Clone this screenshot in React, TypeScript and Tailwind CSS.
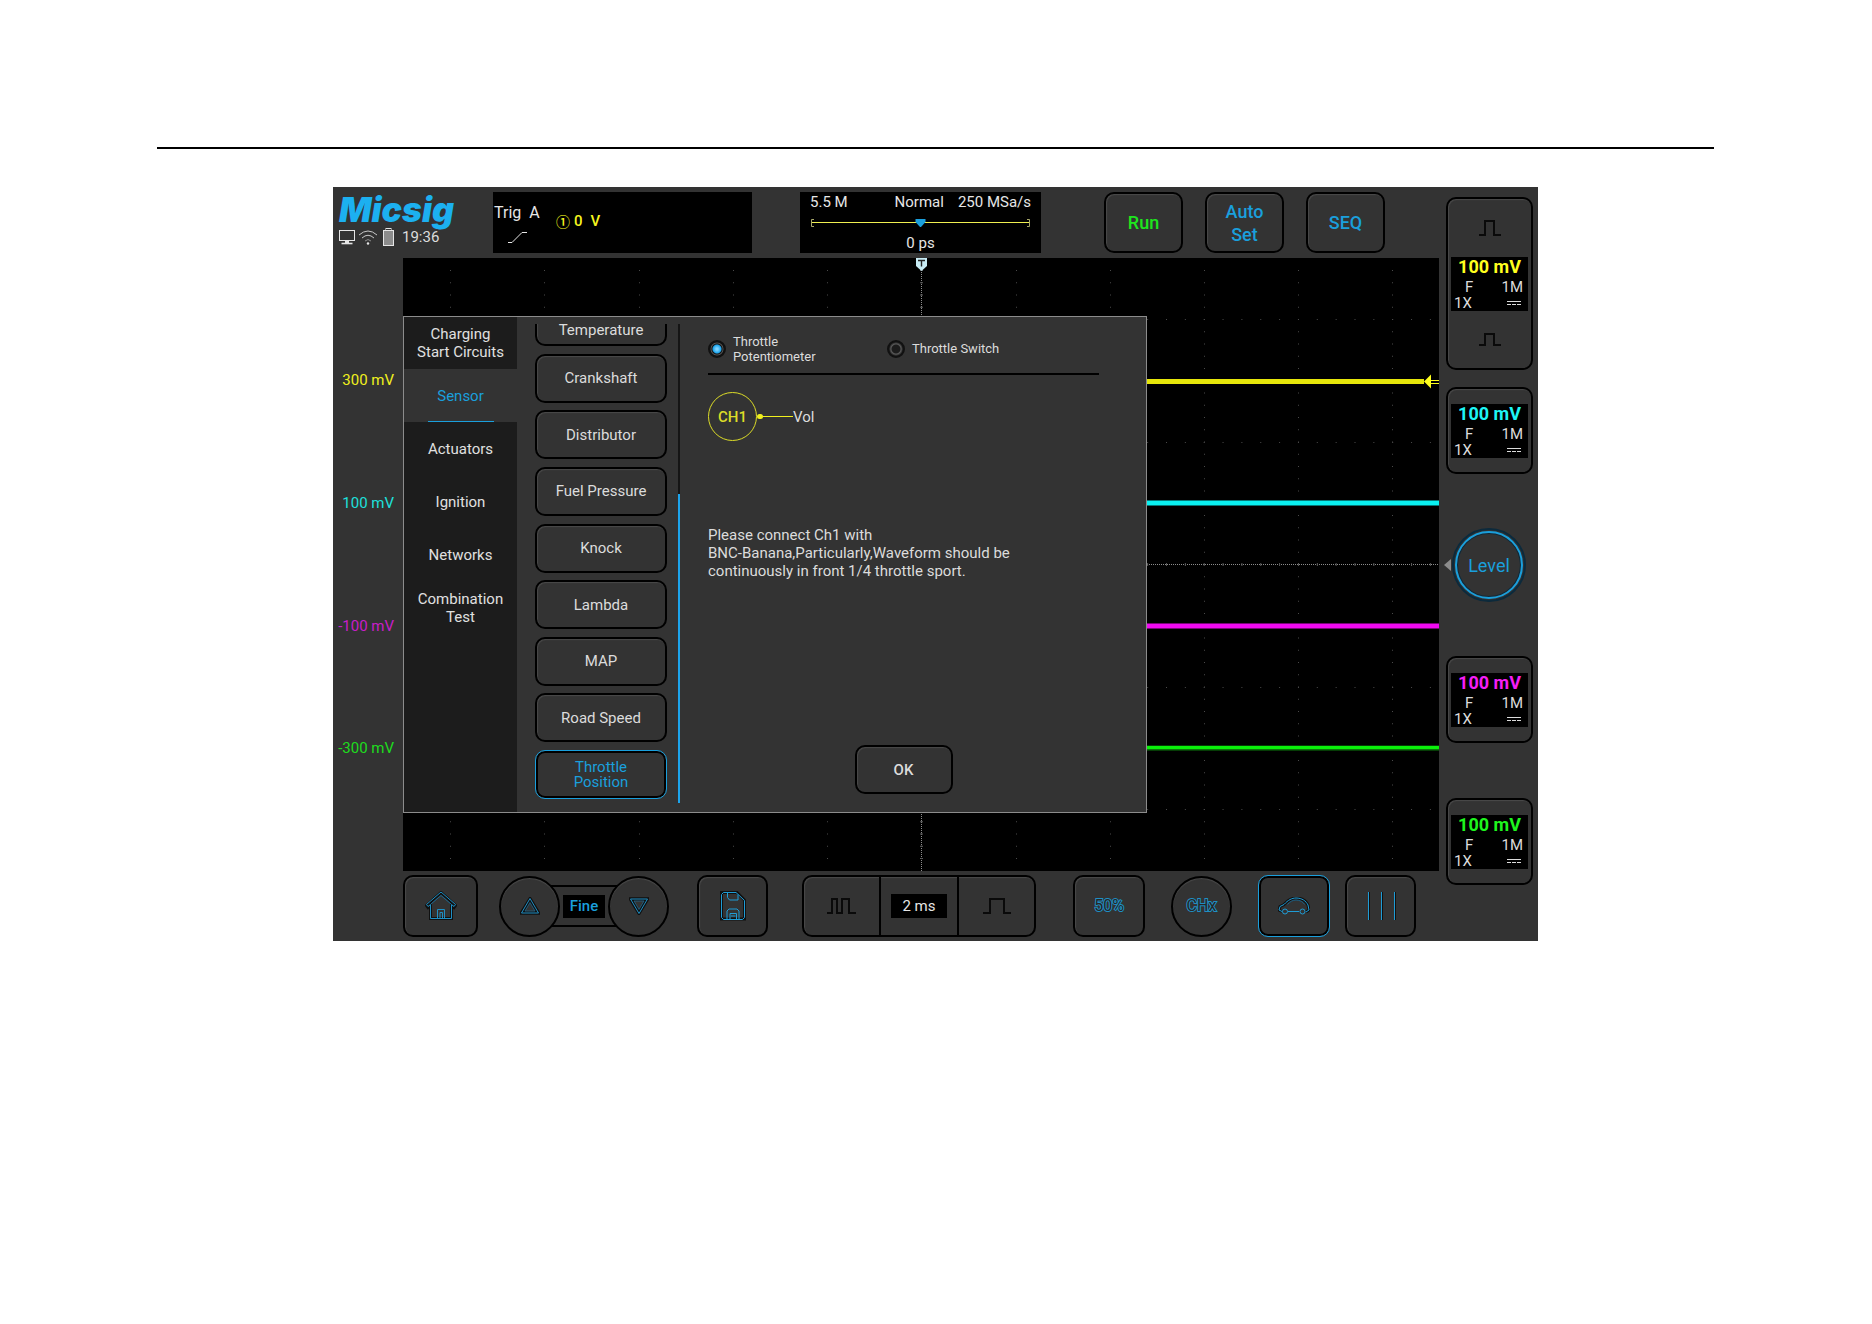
import React, { useState } from 'react';
import { clsx } from 'clsx';

const KEY =
  'border-2 border-black bg-[#333] rounded-[10px] shadow-[inset_1px_1px_1px_#4a4a4a] flex items-center justify-center';
const KEY_ACTIVE =
  'border border-[#1a9fdc] bg-[#333] rounded-[10px] shadow-[inset_0_0_0_2px_#000] flex items-center justify-center';
const ROUND_KEY =
  'border-2 border-black bg-[#333] rounded-full shadow-[inset_0_1px_1px_#4a4a4a] flex items-center justify-center';

const tabs = ['Charging\nStart Circuits', 'Sensor', 'Actuators', 'Ignition', 'Networks', 'Combination\nTest'];

const sensors = [
  'Temperature',
  'Crankshaft',
  'Distributor',
  'Fuel Pressure',
  'Knock',
  'Lambda',
  'MAP',
  'Road Speed',
  'Throttle\nPosition',
];

const scaleLabels = [
  { text: '300 mV', color: 'text-[#f0f01e]' },
  { text: '100 mV', color: 'text-[#1ee0dc]' },
  { text: '-100 mV', color: 'text-[#c81ec8]' },
  { text: '-300 mV', color: 'text-[#1edc1e]' },
];

/* ---------- icons ---------- */

const MonitorIcon = () => (
  <svg width="16" height="16" viewBox="0 0 16 16" fill="none" stroke="#e6e6e6">
    <rect x="0.5" y="1.5" width="15" height="10" />
    <path d="M8 11.5v3" strokeWidth="4" />
    <path d="M2.5 14.5h11" strokeWidth="1.6" />
  </svg>
);

const WifiIcon = () => (
  <svg width="20" height="16" viewBox="0 0 20 16" fill="none" stroke="#c8c8c8">
    <path d="M1 6Q10 -2 19 6" />
    <path d="M4 9Q10 3.5 16 9" />
    <path d="M7 12Q10 9 13 12" stroke="#8c8c8c" />
    <circle cx="10" cy="14.5" r="1.2" fill="#e6e6e6" stroke="none" />
  </svg>
);

const BatteryIcon = () => (
  <svg width="11" height="18" viewBox="0 0 11 18">
    <rect x="3" y="0.5" width="5" height="2" fill="none" stroke="#e6e6e6" />
    <rect x="0.5" y="2.5" width="10" height="15" fill="#8c8c8c" stroke="#e6e6e6" />
  </svg>
);

const PulseIcon = ({ d, width = 24 }: { d: string; width?: number }) => (
  <svg width={width} height="18" viewBox={`0 0 ${width} 18`} fill="none" stroke="#0a0a0a" strokeWidth="2">
    <path d={d} />
  </svg>
);

const HomeIcon = () => (
  <svg width="32" height="30" viewBox="0 0 32 30" fill="none">
    <g stroke="#101010" strokeWidth="3">
      <path d="M1.5 14.5L16 1.5l14.5 13-1.5 2L26.5 14.5v13h-21v-13L3 16.5z" />
    </g>
    <g stroke="#1f8fc4">
      <path d="M1.5 13.5L16 1l14.5 12.5-1.5 2L26.5 13.500V27.500h-21V13.500L3 15.500z" />
      <path d="M6 13l10-8.500L26 13" stroke="#1a6a94" />
      <path d="M12.500 27.500v-9h7v9M15 27.500v-6h2.500v6" />
    </g>
  </svg>
);

const TriangleIcon = ({ down }: { down?: boolean }) => (
  <svg width="20" height="18" viewBox="0 0 20 18" fill="none" className={clsx(down && 'rotate-180')}>
    <path d="M10 2L18.5 16h-17z" stroke="#101010" strokeWidth="3.500" />
    <path d="M10 1.5L18.5 16h-17z" stroke="#1f8fc4" />
    <path d="M10 5.5L15 14H5z" stroke="#1f6f98" strokeWidth="0.7" />
  </svg>
);

const SaveIcon = () => (
  <svg width="26" height="30" viewBox="0 0 26 30" fill="none">
    <path d="M1.5 1.5H17L24.5 9v19h-23z" stroke="#101010" strokeWidth="3" />
    <g stroke="#1f9cd6">
      <path d="M3.5 1.5H16L24.5 9.5v17l-2 2h-19l-2-2v-23z" />
      <path d="M7.5 1.5v5l2 2.5h8.500V3.500" />
      <path d="M7 28.500V20l2-2h8l2 2v8.500" />
      <path d="M10 28v-5.500h6.500V28M11 25h4.500" />
    </g>
  </svg>
);

const CarIcon = () => (
  <svg width="32" height="18" viewBox="0 0 32 18" fill="none">
    <g stroke="#101010" strokeWidth="3">
      <path d="M4 14.5L1 13l1-3.5 4-2C10 3 14 1 18 1c6 0 10 3 12 7l1 5-3 2" />
    </g>
    <g stroke="#1f9cd6">
      <path d="M4 14.5L1 13l1-3.5 4-2C10 3 14 1 18 1c6 0 10 3 12 7l1 5-3 2M10 14.5h11" />
      <path d="M9.500 7.500C12 4.500 15 3 18 3c4 0 7 2 8.500 4.500" stroke="#1a5f84" />
      <circle cx="7" cy="14.5" r="2.5" />
      <circle cx="24.5" cy="14.5" r="2.5" />
    </g>
  </svg>
);

const BarsIcon = () => (
  <svg width="30" height="30" viewBox="0 0 30 30">
    <path d="M3.500 1v28M16.500 1v28M29.500 1v28" stroke="#101010" />
    <path d="M2.500 1v28M15.500 1v28M28.500 1v28" stroke="#1f9cd6" />
  </svg>
);

const DcIcon = () => (
  <svg width="14" height="6" viewBox="0 0 14 6" stroke="#dcdcdc">
    <path d="M0 1.5h14" />
    <path d="M0 4.5h14" strokeDasharray="4 1" />
  </svg>
);

/* ---------- header ---------- */

const Header = () => (
  <header className="flex h-[71px] items-start pt-[5px]">
    <div className="w-[160px] pl-[6px]">
      <h1 className="font-['Inter'] text-[34px] leading-[36px] font-black text-[#1cb0f0] italic">Micsig</h1>
      <div className="flex h-[18px] items-center">
        <MonitorIcon />
        <span className="ml-[3px]"><WifiIcon /></span>
        <span className="ml-[5px]"><BatteryIcon /></span>
        <time className="ml-[8px] text-[15px] leading-[18px] text-[#dcdcdc]">19:36</time>
      </div>
    </div>

    <div className="flex h-[61px] w-[259px] bg-black pl-px">
      <div className="w-[62px] pt-[12px] text-[16px] leading-[18px] text-[#e6e6e6]">
        <div className="flex gap-[8px]"><span>Trig</span><span>A</span></div>
        <svg width="20" height="13" viewBox="0 0 20 13" className="mt-[9px] ml-[14px]" fill="none" stroke="#e6e6e6">
          <path d="M0 11.5h4L14 1.5h5" />
        </svg>
      </div>
      <div className="flex h-[58px] items-center text-[15px] font-medium text-[#f5f51e]">
        <span className="mr-[4px] font-['Noto_Sans_CJK_SC'] text-[14px] leading-[20px]">①</span>
        <span className="mr-[8px]">0</span>
        <span>V</span>
      </div>
    </div>

    <div className="ml-[48px] h-[61px] w-[241px] bg-black px-[10px] text-[15px] leading-[20px] text-[#e6e6e6]">
      <div className="flex">
        <span>5.5 M</span>
        <span className="ml-auto">Normal</span>
        <span className="ml-[14px]">250 MSa/s</span>
      </div>
      <svg viewBox="0 0 221 20" className="block w-full">
        <path d="M1 10.5h219" stroke="#f0f050" />
        <path d="M4 7.5H1.5v7H4M217 7.5h2.5v7H217" stroke="#a8a86a" fill="none" />
        <path d="M105.5 7h10v3l-4.5 5h-1l-4.5-5z" fill="#1a9fdc" />
      </svg>
      <div className="pt-[1px] text-center">0 ps</div>
    </div>

    <div className="ml-[63px] flex gap-[22px] text-[18px] leading-[23px] font-medium">
      <button className={clsx(KEY, 'h-[61px] w-[79px] text-[#1ee61e]')}>Run</button>
      <button className={clsx(KEY, 'h-[61px] w-[79px] px-4 text-[#1a9fdc]')}>Auto Set</button>
      <button className={clsx(KEY, 'h-[61px] w-[79px] text-[#1a9fdc]')}>SEQ</button>
    </div>
  </header>
);

/* ---------- graticule and traces ---------- */

const vertical = [47, 141, 236, 330, 424, 518, 613, 707, 801, 895, 989];
const horizontal = [61, 184, 429, 551];

const Graticule = () => (
  <svg viewBox="0 0 1036 613" className="block h-auto w-full bg-black">
    <g stroke="#4a4a4a">
      {vertical.map((x) => (
        <path key={x} d={`M${x}.5 12v594`} strokeDasharray="1 11.25" />
      ))}
      {horizontal.map((y) => (
        <path key={y} d={`M9 ${y}.5h1027`} strokeDasharray="1 17.85" />
      ))}
    </g>
    <path d="M518.5 10v603M0 306.5h1036" stroke="#8c8c8c" strokeDasharray="1 1" />
    <path d="M518.5 12v594" stroke="#5a5a5a" strokeWidth="3" strokeDasharray="1 11.25" />
    <path d="M9 306.5h1027" stroke="#5a5a5a" strokeWidth="3" strokeDasharray="1 17.85" />

    <path d="M0 123.5h1024" stroke="#e6e60a" strokeWidth="5" />
    <path d="M1036 120h-20v8h20z" fill="#000" />
    <path d="M0 123.500h1021" stroke="#e6e60a" strokeWidth="5" />
    <path d="M1021 123.5l7-7v14z" fill="#ffff1e" />
    <path d="M1028 122.500h8M1028 125.500h8" stroke="#ffff1e" />
    <path d="M0 245h1036" stroke="#0af0f0" strokeWidth="5" />
    <path d="M0 368h1036" stroke="#f00af0" strokeWidth="5" />
    <path d="M0 490h1036" stroke="#0a780a" strokeWidth="5" />
    <path d="M0 489.5h1036" stroke="#0af00a" strokeWidth="3" />

    <path d="M513 0h11v8l-5.5 5-5.5-5z" fill="#c8ecf5" />
    <path d="M515 2.5h7M518.5 2.5v6" stroke="#222" strokeWidth="1.4" />
  </svg>
);

/* ---------- sensor dialog ---------- */

const radioClass =
  'h-[18px] w-[18px] shrink-0 appearance-none rounded-full border-2 border-[#111] bg-[radial-gradient(circle,#1c1c1c_0_4px,#5a5a5a_5px,#1a1a1a_7px)] checked:bg-[radial-gradient(circle,#7fd4ff_0_1px,#1ca4ec_4px,#111_5px,#555_6px,#111_7px)]';

const SensorDialog = () => {
  const [tab, setTab] = useState('Sensor');
  const [sensor, setSensor] = useState('Throttle\nPosition');
  const [mode, setMode] = useState('potentiometer');

  return (
    <section className="absolute top-[58px] left-0 flex h-[497px] w-[744px] border border-[#8c8c8c] bg-[#333]">
      <nav className="w-[113px] bg-[#1c1c1c]">
        {tabs.map((name) => (
          <button
            key={name}
            onClick={() => setTab(name)}
            className={clsx(
              'relative flex h-[53px] w-full items-center justify-center text-center text-[15px] leading-[18px] whitespace-pre-line first:h-[52px]',
              name === tab ? 'bg-[#333] text-[#1a9fdc]' : 'text-[#e0e0e0]'
            )}
          >
            {name}
            {name === tab && <span className="absolute bottom-0 left-1/2 h-px w-[66px] -translate-x-1/2 bg-[#1a9fdc]" />}
          </button>
        ))}
      </nav>

      <div className="mt-[7px] ml-[18px] flex h-[479px] overflow-hidden">
        <div className="-mt-[27px] flex h-[502px] w-[132px] flex-col justify-between">
          {sensors.map((name) => (
            <button
              key={name}
              onClick={() => setSensor(name)}
              className={clsx(
                'h-[49px] shrink-0 text-center text-[15px] whitespace-pre-line first:pt-[16px]',
                name === sensor ? [KEY_ACTIVE, 'leading-[15px] text-[#1a9fdc]'] : [KEY, 'leading-[18px] text-[#dcdcdc]']
              )}
            >
              {name}
            </button>
          ))}
        </div>
        <div className="ml-[11px] flex w-[2px] flex-col">
          <div className="h-[170px] bg-[#151515]" />
          <div className="flex-1 bg-[#1ca4ec]" />
        </div>
      </div>

      <div className="flex flex-1 flex-col pt-[16px] pr-[47px] pl-[28px] text-[15px] leading-[18px] text-[#dcdcdc]">
        <div className="flex h-[31px] items-center gap-[8px] text-[13px] leading-[15px]">
          <label className="flex w-[171px] items-center gap-[7px] pr-16">
            <input type="radio" name="mode" className={radioClass} checked={mode === 'potentiometer'} onChange={() => setMode('potentiometer')} />
            Throttle Potentiometer
          </label>
          <label className="flex items-center gap-[7px]">
            <input type="radio" name="mode" className={radioClass} checked={mode === 'switch'} onChange={() => setMode('switch')} />
            Throttle Switch
          </label>
        </div>
        <div className="mt-[9px] h-[2px] bg-black" />

        <div className="mt-[17px] flex items-center">
          <span className="flex h-[49px] w-[49px] items-center justify-center rounded-full border border-[#dcdc28] font-medium text-[#dcdc28]">CH1</span>
          <span className="h-[5px] w-[6px] rounded-full bg-[#f0f01e]" />
          <span className="h-px w-[30px] bg-[#f0f01e]" />
          <span>Vol</span>
        </div>

        <p className="mt-[85px]">
          Please connect Ch1 with
          <br />
          BNC-Banana,Particularly,Waveform should be
          <br />
          continuously in front 1/4 throttle sport.
        </p>

        <button className={clsx(KEY, 'mt-auto mb-[18px] h-[49px] w-[98px] self-center font-medium')}>OK</button>
      </div>
    </section>
  );
};

/* ---------- bottom toolbar ---------- */

const outlined =
  'text-[16px] leading-[18px] text-[#262626] [paint-order:stroke] [-webkit-text-stroke:2px_#1f8fc4]';

const Toolbar = () => (
  <footer className="flex h-[70px] items-center pl-[70px]">
    <button aria-label="Home" className={clsx(KEY, 'h-[62px] w-[75px]')}><HomeIcon /></button>

    <div className="relative ml-[21px] flex w-[170px] items-center justify-between">
      <div className="absolute inset-x-[40px] h-[42px] border-2 border-black" />
      <button aria-label="Up" className={clsx(ROUND_KEY, 'relative h-[61px] w-[61px]')}><TriangleIcon /></button>
      <button className="relative h-[23px] w-[42px] bg-black text-[15px] leading-[23px] font-medium text-[#1a9fdc]">Fine</button>
      <button aria-label="Down" className={clsx(ROUND_KEY, 'relative h-[61px] w-[61px]')}><TriangleIcon down /></button>
    </div>

    <button aria-label="Save" className={clsx(KEY, 'ml-[28px] h-[62px] w-[71px]')}><SaveIcon /></button>

    <div className={clsx(KEY, 'ml-[34px] h-[62px] w-[234px]')}>
      <button aria-label="Zoom out" className="flex h-full flex-1 items-center justify-center">
        <PulseIcon width={29} d="M0 16h5V2h5v14h5V2h7v14h7" />
      </button>
      <div className="flex h-full w-[80px] items-center justify-center border-x-2 border-black">
        <span className="h-[24px] w-[56px] bg-black text-center text-[15px] leading-[24px] text-[#e6e6e6]">2 ms</span>
      </div>
      <button aria-label="Zoom in" className="flex h-full flex-1 items-center justify-center">
        <PulseIcon width={28} d="M0 16h7V2h14v14h7" />
      </button>
    </div>

    <button className={clsx(KEY, 'ml-[37px] h-[62px] w-[72px]')}><span className={outlined}>50%</span></button>
    <button className={clsx(ROUND_KEY, 'ml-[26px] h-[61px] w-[61px]')}><span className={outlined}>CHx</span></button>
    <button aria-label="Automotive" className={clsx(KEY_ACTIVE, 'ml-[26px] h-[62px] w-[72px]')}><CarIcon /></button>
    <button aria-label="Cursors" className={clsx(KEY, 'ml-[15px] h-[62px] w-[71px]')}><BarsIcon /></button>
  </footer>
);

/* ---------- channel column ---------- */

const Readout = ({ color }: { color: string }) => (
  <div className="w-[77px] bg-black text-[15px] leading-[16px] text-[#dcdcdc]">
    <div className={clsx('mb-[2px] text-center text-[18px] leading-[20px] font-bold', color)}>100 mV</div>
    <div className="flex justify-between pr-[5px] pl-[14px]"><span>F</span><span>1M</span></div>
    <div className="flex items-center justify-between pr-[7px] pl-[3px]"><span>1X</span><DcIcon /></div>
  </div>
);

const Channels = () => (
  <aside className="flex w-[99px] shrink-0 flex-col pt-[10px] pl-[7px]">
    <div className={clsx(KEY, 'h-[173px] w-[87px] flex-col')}>
      <button aria-label="Increase" className="flex w-full flex-1 items-center justify-center">
        <PulseIcon d="M1 16h6V2h9v14h7" />
      </button>
      <Readout color="text-[#ffff1e]" />
      <button aria-label="Decrease" className="flex w-full flex-1 items-center justify-center">
        <PulseIcon d="M1 15h6V4h9v11h7" />
      </button>
    </div>
    <button className={clsx(KEY, 'mt-[17px] h-[87px] w-[87px] text-left')}><Readout color="text-[#1ef5f5]" /></button>

    <div className="my-[54px] -ml-[2px] flex items-center">
      <svg width="8" height="14" viewBox="0 0 8 14"><path d="M0 7l7-6v12z" fill="#8c8c8c" /></svg>
      <button className="h-[74px] w-[74px] rounded-full border-2 border-[#0c2a3c] p-[1px]">
        <span className="flex h-full w-full items-center justify-center rounded-full border-2 border-[#1a9fdc] text-[18px] text-[#1a9fdc] shadow-[inset_0_0_0_1px_#0c2a3c]">
          Level
        </span>
      </button>
    </div>

    <button className={clsx(KEY, 'h-[87px] w-[87px] text-left')}><Readout color="text-[#f51ef5]" /></button>
    <button className={clsx(KEY, 'mt-[55px] h-[87px] w-[87px] text-left')}><Readout color="text-[#1ef51e]" /></button>
  </aside>
);

export default function App() {
  return (
    <div className="min-h-screen bg-white pt-[147px] pr-[158px] pl-[157px] font-['Roboto',sans-serif]">
      <hr className="border-0 border-t-2 border-black" />

      <main className="mx-[176px] mt-[38px] flex bg-[#333]">
        <div className="flex min-w-0 flex-1 flex-col">
          <Header />
          <div className="flex">
            <div className="flex w-[70px] shrink-0 flex-col py-[61px] pr-[9px] text-right text-[15px]">
              {scaleLabels.map((label) => (
                <span key={label.text} className={clsx('flex flex-1 items-center justify-end', label.color)}>
                  {label.text}
                </span>
              ))}
            </div>
            <div className="relative min-w-0 flex-1">
              <Graticule />
              <SensorDialog />
            </div>
          </div>
          <Toolbar />
        </div>
        <Channels />
      </main>
    </div>
  );
}
